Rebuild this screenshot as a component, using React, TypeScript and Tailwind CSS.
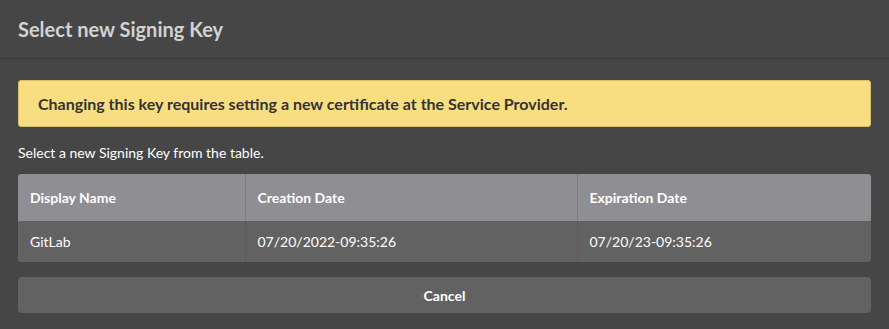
export default function App() {
  const rows = [{ name: 'GitLab', created: '07/20/2022-09:35:26', expires: '07/20/23-09:35:26' }]

  return (
    <div
      className="h-[329px] w-[889px] bg-[#464646] text-white"
      style={{ fontFamily: 'Lato, "Open Sans", sans-serif' }}
    >
      {/* Header */}
      <div className="flex h-[59px] items-center border-b border-[#3b3b3b] px-[18px]">
        <h2 className="text-[20px] font-bold text-[#d2d2d2]">Select new Signing Key</h2>
      </div>

      <div className="px-[18px] pt-[21px]">
        <div className="flex h-[47px] items-center rounded-[3px] border border-[#d8c06a] bg-[#f8de80] px-[19px]">
          <p className="text-[16px] font-bold text-[#333333]">
            Changing this key requires setting a new certificate at the Service Provider.
          </p>
        </div>

        <p className="mt-[16px] text-[14px] leading-[20px] text-white">Select a new Signing Key from the table.</p>

        <table className="mt-[11px] w-full border-collapse overflow-hidden rounded-[3px] text-[14px]">
          <thead>
            <tr className="h-[47px] bg-[#8f8e92] text-left">
              <th className="w-[227px] border-r border-[#7c7b7f] pl-[12px] font-bold">Display Name</th>
              <th className="w-[332px] border-r border-[#7c7b7f] pl-[12px] font-bold">Creation Date</th>
              <th className="pl-[12px] font-bold">Expiration Date</th>
            </tr>
          </thead>
          <tbody>
            {rows.map((row, i) => (
              <tr key={i} className="h-[41px] bg-[#626262]">
                <td className="border-r border-[#5a5a5a] pl-[12px]">{row.name}</td>
                <td className="border-r border-[#5a5a5a] pl-[12px]">{row.created}</td>
                <td className="pl-[12px]">{row.expires}</td>
              </tr>
            ))}
          </tbody>
        </table>

        <button
          type="button"
          className="mt-[15px] h-[36px] w-full rounded-[4px] bg-[#626262] text-[14px] font-bold text-white"
        >
          Cancel
        </button>
      </div>
    </div>
  )
}
